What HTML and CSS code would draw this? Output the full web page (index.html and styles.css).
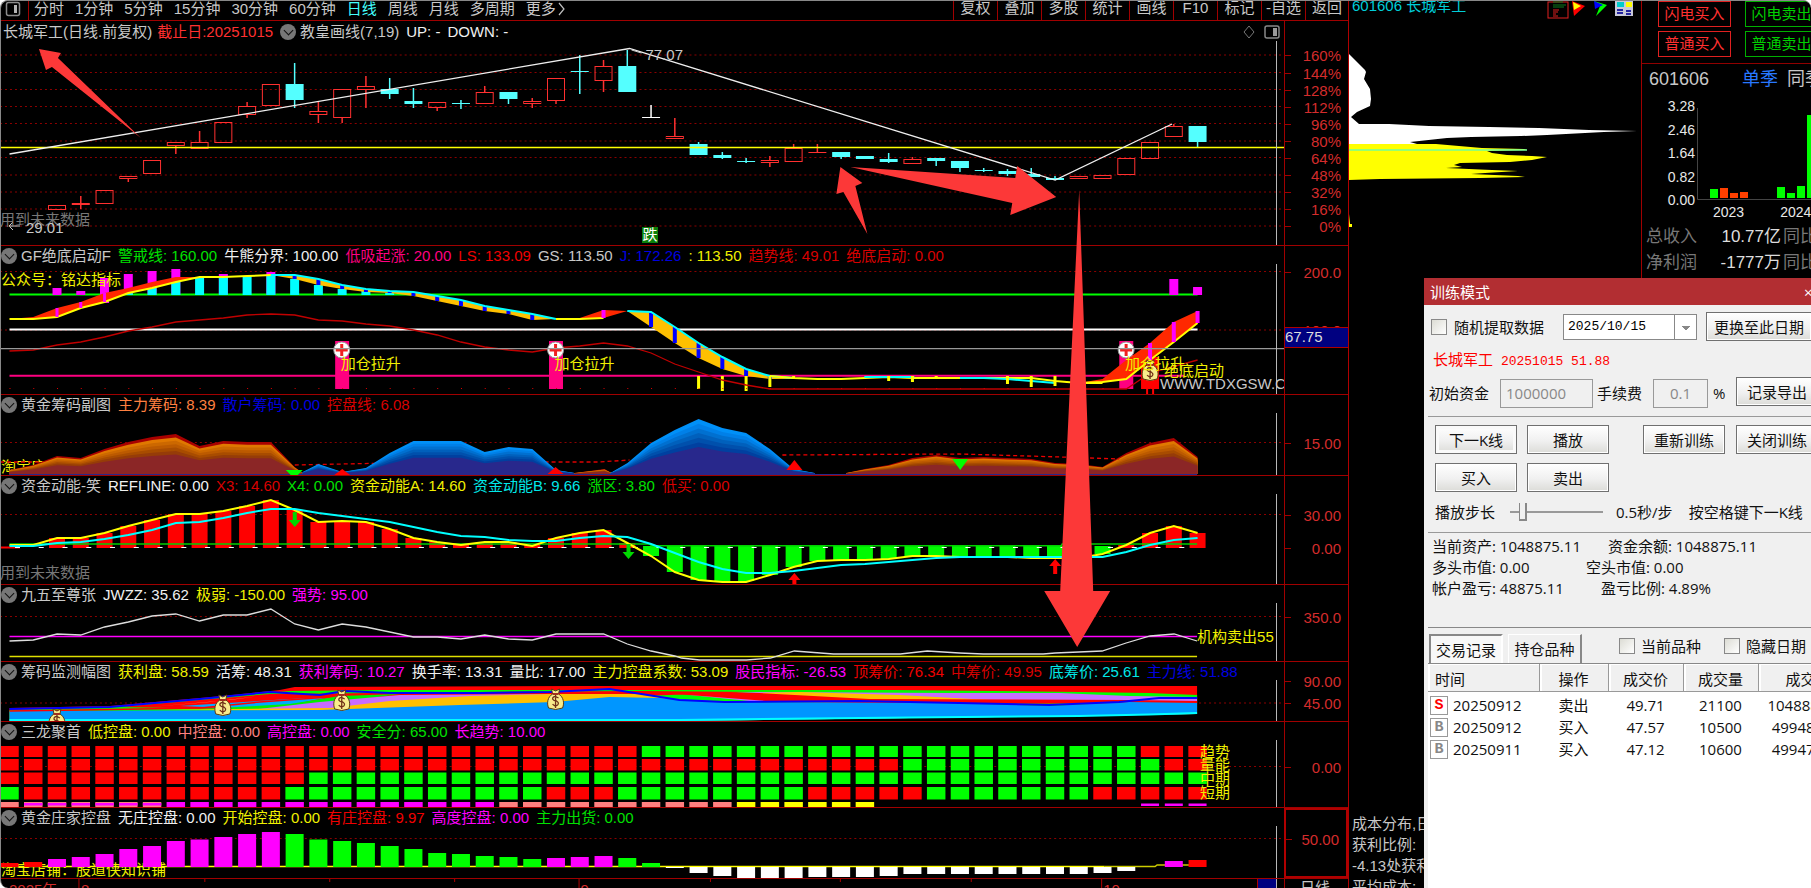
FILE: index.html
```html
<!DOCTYPE html>
<html lang="zh-CN">
<head>
<meta charset="utf-8">
<title>长城军工 601606</title>
<link rel="stylesheet" href="styles.css">
</head>
<body>
<div class="app">
  <main class="workspace">
    <nav class="toolbar">
      <button class="tool-layout" aria-label="布局"><svg viewBox="0 0 16 16" width="16" height="16"><rect x="1.5" y="1.5" width="13" height="13" rx="2" fill="none" stroke="#8c8c8c" stroke-width="1.5"/><rect x="9" y="4" width="3" height="8" fill="#b4b4b4"/></svg></button>
      <div class="periods">
        <button>分时</button><button>1分钟</button><button>5分钟</button><button>15分钟</button><button>30分钟</button><button>60分钟</button><button class="active">日线</button><button>周线</button><button>月线</button><button>多周期</button><button class="more">更多<svg viewBox="0 0 8 14" width="8" height="14"><path d="M1 1L6 7L1 13" fill="none" stroke="#c0c0c0" stroke-width="1.2"/></svg></button>
      </div>
      <div class="actions">
        <button>复权</button><button>叠加</button><button>多股</button><button>统计</button><button>画线</button><button>F10</button><button>标记</button><button>-自选</button><button>返回</button>
      </div>
    </nav>

    <div class="panes">
      <section class="pane" id="p1">
        <div class="plot">
          <header class="legend legend-main"><span>长城军工(日线.前复权)</span><span class="c-red">截止日:20251015</span><i class="fold"></i><span>教皇画线(7,19)</span><span class="c-white">UP: -</span><span class="c-white">DOWN: -</span>
            <span class="corner"><svg viewBox="0 0 12 14" width="12" height="14"><path d="M6 1L11 7L6 13L1 7Z" fill="none" stroke="#777"/></svg><svg viewBox="0 0 16 14" width="16" height="14"><rect x="1" y="1" width="14" height="12" rx="2" fill="none" stroke="#888" stroke-width="1.5"/><rect x="9" y="3" width="4" height="8" fill="#999"/></svg></span></header>
        </div><div class="axis"></div>
      </section>
      <section class="pane" id="p2">
        <div class="plot">
          <header class="legend"><i class="fold"></i><span>GF绝底启动F</span><span class="c-green">警戒线: 160.00</span><span class="c-white">牛熊分界: 100.00</span><span class="c-pink">低吸起涨: 20.00</span><span class="c-pure">LS: 133.09</span><span>GS: 113.50</span><span class="c-blue">J: 172.26</span><span class="c-yellow">: 113.50</span><span class="c-dark">趋势线: 49.01</span><span class="c-dark">绝底启动: 0.00</span></header>
        </div><div class="axis"><span class="cursor-value">67.75</span></div>
      </section>
      <section class="pane" id="p3">
        <div class="plot">
          <header class="legend"><i class="fold"></i><span>黄金筹码副图</span><span class="c-orange">主力筹码: 8.39</span><span class="c-blue">散户筹码: 0.00</span><span class="c-dark">控盘线: 6.08</span></header>
        </div><div class="axis"></div>
      </section>
      <section class="pane" id="p4">
        <div class="plot">
          <header class="legend"><i class="fold"></i><span>资金动能-笑</span><span class="c-white">REFLINE: 0.00</span><span class="c-dark">X3: 14.60</span><span class="c-green">X4: 0.00</span><span class="c-yellow">资金动能A: 14.60</span><span class="c-cyan">资金动能B: 9.66</span><span class="c-green">涨区: 3.80</span><span class="c-dark">低买: 0.00</span></header>
        </div><div class="axis"></div>
      </section>
      <section class="pane" id="p5">
        <div class="plot">
          <header class="legend"><i class="fold"></i><span>九五至尊张</span><span class="c-white">JWZZ: 35.62</span><span class="c-yellow">极弱: -150.00</span><span class="c-magenta">强势: 95.00</span></header>
        </div><div class="axis"></div>
      </section>
      <section class="pane" id="p6">
        <div class="plot">
          <header class="legend"><i class="fold"></i><span>筹码监测幅图</span><span class="c-yellow">获利盘: 58.59</span><span class="c-white">活筹: 48.31</span><span class="c-magenta">获利筹码: 10.27</span><span class="c-white">换手率: 13.31</span><span class="c-white">量比: 17.00</span><span class="c-yellow">主力控盘系数: 53.09</span><span class="c-magenta">股民指标: -26.53</span><span class="c-pure">顶筹价: 76.34</span><span class="c-dark">中筹价: 49.95</span><span class="c-cyan">底筹价: 25.61</span><span class="c-blue">主力线: 51.88</span></header>
        </div><div class="axis"></div>
      </section>
      <section class="pane" id="p7">
        <div class="plot">
          <header class="legend"><i class="fold"></i><span>三龙聚首</span><span class="c-yellow">低控盘: 0.00</span><span class="c-salmon">中控盘: 0.00</span><span class="c-magenta">高控盘: 0.00</span><span class="c-green">安全分: 65.00</span><span class="c-magenta">长趋势: 10.00</span></header>
        </div><div class="axis"></div>
      </section>
      <section class="pane" id="p8">
        <div class="plot">
          <header class="legend"><i class="fold"></i><span>黄金庄家控盘</span><span class="c-white">无庄控盘: 0.00</span><span class="c-yellow">开始控盘: 0.00</span><span class="c-pure">有庄控盘: 9.97</span><span class="c-magenta">高度控盘: 0.00</span><span class="c-green">主力出货: 0.00</span></header>
        </div><div class="axis axis-selected"></div>
      </section>
    </div>
    <footer class="timeline"><div class="plot"></div><div class="period">日线</div></footer>
    <svg class="arrows" viewBox="0 0 1349 888" preserveAspectRatio="none" fill="#fc3838">
      <path d="M39 49L61 53L58 58L141 138L52 67L46 70Z"/>
      <path d="M841 167L863 183L856 186L868 234L844 192L837 194Z"/>
      <path d="M851 167L1016 178L1018 166L1057 197L1011 215L1013 203Z"/>
      <path d="M1080 190L1094 591L1111 591L1078 647L1045 591L1061 591Z"/>
    </svg>
  </main>

  <aside class="side">
    <section class="chips">
      <header class="chips-head"><span>601606 长城军工</span>
        <svg viewBox="0 0 88 20" width="88" height="20">
          <rect x="1" y="1" width="20" height="16" fill="none" stroke="#e02020"/><path d="M6 1H16M6 4H19M6 6H17" stroke="#0a7d1c"/><path d="M6 9H12M6 11H11M6 13H9M6 15H11" stroke="#e02020"/>
          <path d="M25 0L38 5L27 15Z" fill="#f00"/><path d="M26 1L34 5L27 9Z" fill="#ff0"/>
          <path d="M47 0L60 4L49 15L53 5Z" fill="#0f0"/><path d="M47 0L56 4L48 8Z" fill="#00f"/>
          <rect x="68" y="0" width="18" height="15" fill="#c8c8d8"/><rect x="70" y="1" width="7" height="5" fill="#0cc"/><rect x="79" y="1" width="6" height="5" fill="#ff0"/><path d="M70 9H76M70 12H76M79 10H84M79 13H84" stroke="#2424a0" stroke-width="2"/>
        </svg></header>
      <svg class="chips-chart" viewBox="0 0 293 240" width="293" height="240">
        <path d="M0 33L16 49L17 51L15 58L21 68L22 78L21 85L8 91L2 96L10 103H40L80 105L140 106L190 107L240 109L288 110L255 111L198 114L172 115L122 116L98 117L61 121L68 123H0Z" fill="#fff"/>
        <path d="M0 123H87L110 125L133 127L175 128L178 129L138 130L143 132L158 134L183 135L198 136L183 139L161 141L111 142L105 144L113 146L97 147L143 149L169 150L136 152L122 153L169 155L176 156L131 157L31 158L0 159Z" fill="#ff0"/>
        <path d="M0 129H178" stroke="#6fff9a" stroke-width="1.5"/>
        <path d="M0 193L1 203L3 203V206H0Z" fill="#ff0"/>
      </svg>
      <div class="chips-info"><p>成本分布,日期</p><p>获利比例:</p><p>-4.13处获利</p><p>平均成本:</p></div>
    </section>
    <section class="quote">
      <div class="orders"><button class="buy">闪电买入</button><button class="sell">闪电卖出</button><button class="buy">普通买入</button><button class="sell">普通卖出</button></div>
      <div class="quote-head"><span>601606</span><a href="#" class="quarter">单季</a><a href="#">同季</a></div>
      <div class="finance">
        <div class="ticks"><span>3.28</span><span>2.46</span><span>1.64</span><span>0.82</span><span>0.00</span></div>
        <svg viewBox="0 0 115 96" width="115" height="96"><path d="M1.500 3V94.500H115" fill="none" stroke="#444"/><g fill="#0f0"><rect x="14" y="84" width="8" height="9"/><rect x="81" y="82" width="8" height="11"/><rect x="91" y="88" width="8" height="5"/><rect x="101" y="81" width="8" height="12"/><rect x="111" y="10" width="8" height="83"/></g><g fill="#ff4000"><rect x="24" y="83" width="8" height="10"/><rect x="34" y="88" width="8" height="5"/><rect x="44" y="87" width="8" height="6"/></g></svg>
        <div class="years"><span>2023</span><span>2024</span></div>
      </div>
      <dl class="figures"><dt>总收入</dt><dd>10.77亿</dd><dd class="yoy">同比</dd><dt>净利润</dt><dd>-1777万</dd><dd class="yoy">同比</dd></dl>
    </section>

    <section class="dialog" role="dialog" aria-label="训练模式">
      <header class="title"><span>训练模式</span><button aria-label="关闭">×</button></header>
      <div class="form">
        <div class="row row-date"><label><input type="checkbox">随机提取数据</label><select aria-label="日期"><option>2025/10/15</option></select><button class="btn btn-wide">更换至此日期</button></div>
        <p class="picked">长城军工 <span>20251015 51.88</span></p>
        <div class="row row-fund"><label for="fund">初始资金</label><input id="fund" type="text" value="1000000" disabled><label for="fee">手续费</label><input id="fee" type="text" value="0.1" disabled><span class="percent">%</span><button class="btn">记录导出</button></div>
      </div>
      <div class="controls">
        <button class="btn focus">下一K线</button><button class="btn">播放</button><button class="btn restart">重新训练</button><button class="btn">关闭训练</button>
        <button class="btn">买入</button><button class="btn">卖出</button>
      </div>
      <div class="row row-step"><label for="step">播放步长</label><input id="step" type="range" min="0" max="10" value="1"><span>0.5秒/步</span><span class="hint">按空格键下一K线</span></div>
      <div class="summary">
        <p><span>当前资产: 1048875.11</span><span>资金余额: 1048875.11</span></p>
        <p class="s2"><span>多头市值: 0.00</span><span>空头市值: 0.00</span></p>
        <p class="s3"><span>帐户盈亏: 48875.11</span><span>盈亏比例: 4.89%</span></p>
      </div>
      <div class="tabs"><button class="tab selected">交易记录</button><button class="tab">持仓品种</button><label><input type="checkbox">当前品种</label><label><input type="checkbox">隐藏日期</label></div>
      <div class="records">
        <table>
          <colgroup><col class="k1"><col class="k2"><col class="k3"><col class="k3"><col class="k4"></colgroup>
          <thead><tr><th>时间</th><th>操作</th><th>成交价</th><th>成交量</th><th>成交额</th></tr></thead>
          <tbody>
            <tr><td><b class="mark s">S</b>20250912</td><td>卖出</td><td>49.71</td><td>21100</td><td>1048881.00</td></tr>
            <tr><td><b class="mark">B</b>20250912</td><td>买入</td><td>47.57</td><td>10500</td><td>499485.00</td></tr>
            <tr><td><b class="mark">B</b>20250911</td><td>买入</td><td>47.12</td><td>10600</td><td>499472.00</td></tr>
          </tbody>
        </table>
      </div>
    </section>
  </aside>
</div>
<script src="charts.js"></script>
</body>
</html>
```
FILE: styles.css
```css
* { box-sizing: border-box; }
body { margin: 0; background: #fff; color: #c8c8c8; font: 15px/20px "Liberation Sans", "Noto Sans CJK SC", sans-serif; }
p, dl, dd { margin: 0; }
button { font: inherit; color: inherit; background: none; border: 0; padding: 0; white-space: nowrap; }
.app { display: flex; height: 100vh; background: #000; border-radius: 8px 8px 0 8px; overflow: hidden; border-top: 1px solid #888; border-left: 1px solid #888; margin: 0; }
.workspace { position: relative; flex: 1; min-width: 0; display: flex; flex-direction: column; border-right: 1px solid #b00000; margin-left: -1px; margin-top: -1px; }

.toolbar { display: flex; height: 21px; flex: none; border-bottom: 1px solid #a00000; overflow: hidden; line-height: 15px; }
.tool-layout { width: 29px; border-right: 1px solid #a00000; text-align: left; padding-left: 5px; }
.periods { display: flex; gap: 11px; padding-left: 5px; flex: 1; }
.periods button, .actions button { height: 16px; }
.more svg { vertical-align: -2px; margin-left: 2px; }
.active { color: #4ff; }
.actions { display: grid; grid-template-columns: repeat(8, 44px) 43px; }
.actions button { border-left: 1px solid #a00000; height: 20px; padding-bottom: 5px; }

.panes { flex: 1; min-height: 0; display: grid; grid-template-rows: 225fr 149fr 81fr 109fr 77fr 60fr 86fr 71fr; }
.pane { min-height: 0; display: flex; border-bottom: 1px solid #a00000; }
.plot { position: relative; flex: 1; min-width: 0; overflow: hidden; }
.plot > svg { position: absolute; left: 0; top: 0; width: 100%; height: 100%; }
.axis { position: relative; width: 64px; border-left: 1px solid #a00000; color: #d42c2c; }
.axis-selected { border: 2px solid #b00000; }
.axis .tick { position: absolute; right: 7px; height: 20px; margin-top: -9px; }
.axis .tick::before { content: ""; position: absolute; right: 100%; width: 50px; }
.axis .dash { position: absolute; left: 0; width: 6px; height: 1px; background: #a00000; }
.cursor-value { position: absolute; left: 0; right: 0; top: 55%; height: 21px; background: #000080; border: solid #b00000; border-width: 1px 0; color: #ddd; z-index: 1; line-height: 18px; }
.legend { position: relative; z-index: 1; display: flex; align-items: center; gap: 7px; height: 19px; white-space: nowrap; padding-left: 1px; }
.legend .fold + span { margin-left: -3px; }
.legend-main { height: 22px; gap: 7px; padding-left: 3px; }
.legend-main .c-red { margin-left: -2px; }
.corner { display: flex; gap: 9px; margin-left: auto; padding-right: 4px; }
.fold { width: 16px; height: 16px; border-radius: 8px; background: #777; display: flex; align-items: center; justify-content: center; flex: none; }
.fold::before { content: ""; width: 6px; height: 6px; border: solid #111; border-width: 0 1px 1px 0; transform: rotate(45deg); margin-top: -3px; }
.note { position: absolute; white-space: nowrap; height: 20px; margin-top: -10px; }
.badge { background: #0a800a; color: #fff; width: 16px; height: 16px; line-height: 16px; margin-top: -8px; }
.c-red { color: #ff3030; } .c-pure { color: #f00000; } .c-dark { color: #d80000; } .c-white { color: #f0f0f0; }
.c-green { color: #00e000; } .c-pink { color: #ff0080; } .c-blue { color: #0000e0; } .c-yellow { color: #f0f000; }
.c-orange { color: #ff8040; } .c-cyan { color: #00e8e8; } .c-magenta { color: #ff00ff; } .c-salmon { color: #ff8080; }
.c-grey { color: #777; } .c-light { color: #c8c8c8; }
.timeline { display: flex; height: 9px; flex: none; overflow: hidden; color: #d42c2c; }
.timeline .note { margin-top: 0; }
.period { width: 64px; border-left: 1px solid #a00000; padding-left: 15px; color: #c8c8c8; line-height: 18px; }
.arrows { position: absolute; left: 0; top: 0; width: 100%; height: 100%; z-index: 3; pointer-events: none; }

.side { position: relative; width: 462px; flex: none; display: flex; overflow: hidden; }
.chips { width: 293px; flex: none; border-right: 1px solid #a00000; display: flex; flex-direction: column; }
.chips-head { display: flex; justify-content: space-between; height: 20px; color: #00cdd8; line-height: 10px; padding: 0 6px 0 3px; }
.chips-chart { display: block; }
.chips-info { margin-top: auto; height: 75px; padding-left: 3px; line-height: 21px; overflow: hidden; white-space: nowrap; }
.quote { flex: 1; min-width: 0; overflow: hidden; }
.orders { display: grid; grid-template-columns: 73px 73px; gap: 4px 14px; padding: 0 0 6px 16px; border-bottom: 1px solid #900000; }
.orders button { height: 26px; border: 1px solid; }
.buy { color: #ff3030; } .sell { color: #00d000; }
.orders .buy { border-color: #e02020; } .orders .sell { border-color: #00b000; }
.quote-head { display: flex; gap: 9px; padding: 5px 0 0 7px; font-size: 18px; white-space: nowrap; }
.quote-head .quarter { margin-left: 24px; color: #2878ff; }
.quote-head a { color: inherit; text-decoration: none; }
.finance { display: grid; grid-template-columns: 53px 115px; column-gap: 1px; padding-top: 15px; font-size: 14px; line-height: 16px; color: #e8e8e8; }
.ticks { display: flex; flex-direction: column; justify-content: space-between; text-align: right; height: 110px; margin-top: -6px; }
.finance svg { margin-top: 1px; }
.years { grid-column: 2; display: flex; gap: 36px; padding-left: 17px; margin-top: -4px; }
.figures { display: grid; grid-template-columns: 53px 80px 40px; column-gap: 2px; row-gap: 6px; font-size: 17px; padding: 7px 0 0 4px; white-space: nowrap; color: #ddd; }
.figures dd { text-align: right; }
.figures dt, .figures .yoy { color: #777; text-align: left; }

.dialog { position: absolute; left: 75px; right: 0; top: 277px; bottom: 0; background: #f0f0f0; color: #111; font-family: "Open Sans", "Noto Sans CJK SC", sans-serif; display: flex; flex-direction: column; overflow: hidden; white-space: nowrap; }
.title { background: #b22e32; color: #fff; height: 27px; flex: none; display: flex; justify-content: space-between; align-items: center; padding: 0 0 0 6px; }
.title button { width: 7px; overflow: hidden; }
.form { height: 112px; flex: none; border-bottom: 1px solid #999; margin-left: 4px; }
.row { display: flex; align-items: center; }
.row > *, .tabs > * { flex: none; }
label { display: inline-flex; align-items: center; gap: 7px; }
input[type=checkbox] { appearance: none; width: 16px; height: 16px; margin: 0; border: 1px solid #888; background: linear-gradient(135deg, #dcdcd4, #fff); }
.row-date { padding: 7px 0 0 3px; }
.row-date select { appearance: none; width: 134px; height: 26px; margin: 0 9px 0 19px; padding: 0 4px; border: 1px solid #888; border-radius: 0; color: #000; font: 13px "Liberation Mono", monospace; background: linear-gradient(#888, #888) 110px 0 / 1px 100% no-repeat, conic-gradient(from -45deg at 50% 100%, #888 90deg, transparent 0) 117px 11px / 9px 5px no-repeat, #fff; background: linear-gradient(#888, #888) 110px 0 / 1px 100% no-repeat, linear-gradient(to bottom left, #888 50%, transparent 50%) 118px 11px / 4px 5px no-repeat, linear-gradient(to bottom right, #888 50%, transparent 50%) 122px 11px / 4px 5px no-repeat, #fff; }
.btn { height: 29px; width: 82px; border: 1px solid #707070; background: linear-gradient(#fff, #f0f0f0 55%, #dcdcd8); box-shadow: inset 0 0 0 1px #fff; }
.btn-wide { width: 106px; }
.focus { box-shadow: inset 0 0 0 3px #fafafa; }
.picked { color: #f00; height: 36px; line-height: 36px; padding-left: 5px; }
.picked span { font: 13px "Liberation Mono", monospace; margin-left: 4px; }
.row-fund input { height: 29px; width: 93px; margin: 0 4px 0 11px; border: 1px solid #999; background: #f0f0f0; color: #888; font: inherit; padding: 0 5px; }
.row-fund #fee { width: 55px; text-align: center; margin: 0 5px 0 11px; }
.row-fund .percent { width: 23px; }
.row-fund .btn { margin-bottom: 3px; }
.row-fund { padding-left: 1px; }
.controls { display: grid; grid-template-columns: 82px 82px 82px 82px; gap: 9px 10px; padding: 8px 0 0 11px; flex: none; }
.controls .restart { margin-left: 24px; }
.controls .restart + .btn { margin-left: 25px; }
.row-step { height: 41px; flex: none; margin-left: 4px; padding-left: 7px; border-bottom: 1px solid #999; }
.row-step input { appearance: none; width: 93px; height: 18px; margin: 0 13px 0 15px; background: linear-gradient(#999, #999) 0 8px / 100% 2px no-repeat; }
.row-step input::-webkit-slider-thumb { appearance: none; width: 8px; height: 18px; background: #f0f0f0; border: 1px solid #888; border-width: 0 2px 2px 1px; }
.hint { margin-left: 16px; }
.summary { height: 95px; flex: none; margin-left: 4px; padding: 3px 0 0 4px; line-height: 21px; border-bottom: 1px solid #888; }
.summary span:first-child { display: inline-block; width: 176px; }
.summary .s2 span:first-child { width: 154px; }
.summary .s3 span:first-child { width: 169px; }
.tabs { display: flex; align-items: flex-end; height: 36px; flex: none; margin-left: 4px; border-bottom: 1px solid #888; }
.tab { height: 29px; width: 74px; margin: 0 2px 0 1px; border: solid #fff; border-width: 1px 2px 0 1px; border-right-color: #888; }
.tab.selected { background: #f8f8f8; border: 2px solid #888; border-right-color: #fff; border-bottom: 0; margin-right: 4px; }
.tabs label { gap: 6px; height: 20px; margin: 0 0 7px 35px; }
.tabs label + label { margin-left: 23px; }
.records { flex: 1; background: #fff; margin-left: 4px; overflow: hidden; }
table { border-collapse: collapse; table-layout: fixed; width: 430px; }
.k1 { width: 111px; } .k2 { width: 69px; } .k3 { width: 75px; } .k4 { width: 100px; }
th { height: 27px; padding: 4px 0 0; font-weight: normal; background: #f0f0f0; border-right: 1px solid #999; border-bottom: 1px solid #999; box-shadow: inset 2px 1px #fff; }
th:first-child { text-align: left; padding-left: 7px; }
td { padding: 0; text-align: center; height: 22px; line-height: 22px; }
tbody::before { content: ""; display: table-row; height: 3px; }
td:first-child { text-align: left; }
.mark { display: inline-block; width: 18px; height: 19px; margin: 2px 5px 0 2px; border: 1px solid #999; color: #888; font: 700 15px/17px "Liberation Mono", monospace; text-align: center; vertical-align: top; }
.mark.s { color: #f00; }
```
FILE: charts.js
```javascript
const W = 1285;
const X = i => 9.5 + 23.78 * i;
const series = (ys, start = 0) => ys.map((y, k) => [X(start + k), y]);
const pts = a => a.map(p => p.map(v => +v.toFixed(1)).join(',')).join(' ');
const rect = (x, y, w, h, fill) => `<rect x="${x}" y="${y}" width="${w}" height="${h}" fill="${fill}"/>`;
const line = (x1, y1, x2, y2, c, w = 1, extra = '') => `<line x1="${x1}" y1="${y1}" x2="${x2}" y2="${y2}" stroke="${c}" stroke-width="${w}" ${extra}/>`;
const poly = (a, c, w = 1, extra = '') => `<polyline points="${pts(a)}" fill="none" stroke="${c}" stroke-width="${w}" ${extra}/>`;
const area = (a, c) => `<polygon points="${pts(a)}" fill="${c}"/>`;
const grid = y => line(0, y, W, y, '#8c0000', 1, 'stroke-dasharray="2 3"');
const bar = (i, y1, y2, c, w = 18) => rect(X(i) - w / 2, y1, w, y2 - y1, c);
const bag = (x, y) => `<g transform="translate(${x} ${y})"><path d="M-4 -11L0 -9L4 -11L3 -6C8 -3 9 3 7 8Q0 11 -7 8C-9 3 -8 -3 -3 -6Z" fill="#f8ec8c" stroke="#5a3a10"/><path d="M-3 -6H3" stroke="#a03020" stroke-width="2"/><path d="M3 -2Q-3 -5 -3 -1Q-2 1 1 1Q4 3 2 5Q-1 7 -3 4M0 -5V8" fill="none" stroke="#703018" stroke-width="1.3"/></g>`;
const cross = (x, y) => `<circle cx="${x}" cy="${y}" r="8" fill="#fff" stroke="#999"/><path d="M${x} ${y - 6}V${y + 6}M${x - 6} ${y}H${x + 6}" stroke="#f02020" stroke-width="3"/>`;

function draw(id, top, height, body, opts = {}) {
  const plot = document.querySelector(`#${id} .plot`);
  const below = (opts.under || []).map(n => note(n, top, height)).join('');
  const above = (opts.notes || []).map(n => note(n, top, height)).join('');
  const cursor = line(1277.5, top + (id === 'p1' ? 20 : 18), 1277.5, top + height, '#b8b8b8');
  plot.insertAdjacentHTML('beforeend', `${below}<svg viewBox="0 ${top} ${W} ${height}" preserveAspectRatio="none">${body}${cursor}</svg>${above}`);
  const axis = document.querySelector(`#${id} .axis`);
  (opts.ticks || []).forEach(([label, y]) => {
    const t = (y - top) / height * 100;
    axis.insertAdjacentHTML('beforeend', `<i class="dash" style="top:${t}%"></i><span class="tick" style="top:${t}%">${label}</span>`);
  });
}
function note([text, x, y, cls], top, height) {
  return `<span class="note ${cls}" style="left:${x / W * 100}%;top:${(y - top) / height * 100}%">${text}</span>`;
}

// Daily candles: index, colour, body top, body bottom, high, low
const R = '#ff3030', C = '#54ffff';
const candles = [
[2,R,205,210],[3,R,203,205,196,209],[4,R,190,204],[5,R,176,179,176,182],[6,R,160,174],[7,R,142,146,142,154],[8,R,142,149,131],[9,R,122,143],[10,R,106,115,102,118],[11,R,84,106],[12,C,84,100,63,108],[13,R,111,115,101,123],[14,R,89,118,89,123],[15,R,86,90,76,108],[16,C,89,94,78,99],[17,C,101,104,88,108],[18,R,102,108,102,111],[19,C,103,104,100,109],[20,R,92,104,86],[21,C,92,99,92,104],[22,R,101,104,98,108],[23,R,78,101,78,104],[24,C,71,72,55,94],[25,R,66,81,60,92],[26,C,66,92,50],[27,'#fff',117,118,105],[28,R,136,139,118],[29,C,144,155,142],[30,C,155,158,152,159],[31,C,161,162,158,163],[32,R,160,163,156,167],[33,R,148,162,144],[34,R,152,153,144],[35,C,152,157,152,159],[36,C,156,159],[37,C,159,162,153,163],[38,R,159,164,157],[39,C,158,161,158,166],[40,C,161,168,161,172],[41,C,170,171,168,172],[42,C,171,174,169,176],[43,C,174,177,168],[44,C,178,180,176],[45,R,176,179],[46,R,175,179],[47,R,158,175],[48,R,142,159],[49,R,126,137,124],[50,C,126,142,126,147]];
const pctY = [55,72.5,89.5,106.5,123.5,141,157.5,175,192,209,226];
draw('p1', 21, 224,
  pctY.map(grid).join('') +
  candles.map(([i, c, a, b, h = a, l = b]) => (h < a ? line(X(i), h, X(i), a, c, 1.5) : '') + (l > b ? line(X(i), b, X(i), l, c, 1.5) : '') +
    (c === R && b - a > 2 ? `<rect x="${X(i) - 8.5}" y="${a + .5}" width="17" height="${b - a - 1}" fill="none" stroke="${c}"/>` : bar(i, a, b, c))).join('') +
  line(0, 147.5, W, 147.5, '#ff0', 1.5) +
  poly([[9.5,154],[630,48.5],[1056,180],[1173,124]], '#eee', 1.3) +
  poly([[20,226],[9,226],[13,222],[9,226],[13,230]], '#ccc') + poly([[642,53],[632,50]], '#ccc'),
  { ticks: pctY.map((y, k) => [`${160 - 16 * k}%`, y]),
    notes: [['用到未来数据',0,220,'c-grey'],['29.01',26,228,'c-light'],['77.07',646,55,'c-light'],['跌',643,235,'badge']] });

// Trend band
const up = series([319,317,308,302,293,288,282,277,277,276,276,275]);
const lo = series([319,319,317,308,302,293,288,282,277,277,276,275]);
const cy1 = [275,275,279,285,289,291,292,296,300,306,310,314,319];
const cl1 = [275,279,285,289,292,293,296,301,306,311,314,320,319];
const cy2 = [311,312,327,343,357,369,376,378], cl2 = [311,327,343,358,369,376,379,379];
const endLo = [383,382,379,360,342,323], endUp = [383,379,360,343,322,311];
let b2 = grid(271.5) + grid(330) + line(9.5, 294.5, X(50), 294.5, '#0f0', 2) + line(9.5, 329.5, X(50), 329.5, '#fff', 2) + line(9.5, 375.7, 1185, 375.7, '#ff0080', 2);
[[2,288],[3,291],[4,278],[5,274],[6,271],[7,269],[9,274],[11,272],[49,279],[50,287]].forEach(([i, y]) => b2 += bar(i, y, 295, '#f0f', 9));
b2 += bar(4, 278, 303, '#f0f', 9);
[292,284,280,277,276,276,275,279,285,289,291,293].forEach((y, k) => b2 += bar(k + 5, y, 295, '#0ff', 9));
b2 += area([...up, ...lo.slice().reverse()], '#ff2800') + poly(lo, '#ff0', 2);
for (let i = 2; i < 5; i++) b2 += bar(i, up[i][1], lo[i][1], '#f0f', 3);
const band = (s, a, b) => {
  let o = area([...series(a, s), ...series(b, s).reverse()], '#ffc000');
  a.forEach((y, k) => { if (b[k] - y > 1) o += bar(s + k, y, b[k], '#00f', 4); });
  return o + poly(series(a, s), '#0ff', 2);
};
b2 += band(11, cy1, cl1);
b2 += area(series([319,318,310,311], 23).concat(series([318,319], 25).slice(0,1), [[X(23),319]]), '#ff2800') + poly(series([319,319,318], 23), '#ff0', 2) + bar(25, 310, 318, '#f0f', 4);
b2 += band(26, cy2, cl2);
b2 += poly(series([376,378,379,379,378,377,378,378,378,378,378,378,381,383,383], 32), '#ff0', 2) + poly([[865,377],[915,377]], '#0ff', 2) + poly(series([378,378,379,381,383], 40), '#0ff', 2);
b2 += bar(14, 341, 389, '#ff0080', 14) + bar(23, 341, 389, '#ff0080', 14) + bar(47, 341, 389, '#ff0080', 14) + bar(48, 357, 389, '#f00', 18) + line(1148, 388, 1148, 394, '#f00', 2) + line(1154, 388, 1154, 394, '#f00', 2);
b2 += area([...series(endUp, 45), ...series(endLo, 45).reverse()], '#ff2800') + poly(series(endLo, 45), '#ff0', 2);
[[48,343,360],[49,322,342],[50,311,323]].forEach(([i, a, b]) => b2 += bar(i, a, b, '#f0f', 4));
[[29,389],[30,391],[31,391],[32,387],[33,379],[37,381],[38,382],[39,379],[42,384],[43,387],[44,386]].forEach(([i, y]) => b2 += bar(i, 376, y, '#ff0', 3));
b2 += poly(series([351,350,345,342,337,331,327,322,320,318,315,314,315,320,321,324,326,330,335,342,347,350,352,348,346,343,346,353,364,372,380,385,389]).concat(series([389,373,360], 47).map((p, k) => k === 2 ? [X(50), 360] : p)), '#c00000', 1.3);
for (let i = 0; i < 51; i++) b2 += rect(X(i), 388, 1, 1, '#d00');
b2 += cross(342, 350) + cross(556, 350) + cross(1127, 350) + bag(1151, 371) + line(0, 348.7, W, 348.7, '#999', 1.3);
draw('p2', 246, 148, b2, { ticks: [['200.0',271.5],['100.0',330]],
  notes: [['公众号：铭达指标',1,280,'c-yellow'],['加仓拉升',341,364,'c-yellow'],['加仓拉升',555,364,'c-yellow'],['加仓拉升',1126,364,'c-yellow'],['绝底启动',1165,371,'c-yellow'],['WWW.TDXGSW.COM',1161,384,'c-light']] });

// Chip areas, drawn as layers shrinking toward the baseline
const layers = (a, cols) => cols.map((c, k) => {
  const f = 1 - k * .085;
  return area([[a[0][0], 474], ...a.map(([x, y]) => [x, 474 - (474 - y) * f]), [a[a.length - 1][0], 474]], c);
}).join('');
const warm = ['#a80000','#e07800','#cc6800','#bc5a00','#a84c00','#963c08','#8b2626'];
const cool = ['#0090f8','#0080e8','#0070d0','#0060bc','#0050ac','#0040a0','#28288c'];
const a1 = series([470,465,456,458,449,442,437,434,446,441,442,442,467]).concat([[303,473]]);
const a2 = [[303,472],[X(13),464],[X(14),472],[X(15),468],[X(16),453],[X(17),441],[X(18),441],[X(19),441],[X(20),452],[X(21),447],[X(22),449],[X(23),470],[575,473]];
const a3 = [[611,473],[628,463],[X(27),443],[X(28),430],[X(29),419],[X(30),428],[X(31),433],[X(32),449],[X(33),469],[815,473]];
const a4 = [[847,473],...series([469,465,458,455,458,457,458,459,463,464,467,453,443,438,457], 36)];
const tri = (x, y, h, c, up) => area(up ? [[x, y], [x + 8, y + h], [x - 8, y + h]] : [[x, y + h], [x + 8, y], [x - 8, y]], c);
const dash = 'stroke-dasharray="4 3"';
draw('p3', 395, 80, grid(442.5) +
  poly([[0,462],[45,462]], '#d00', 1.3, dash) + poly([[295,465],[390,463]], '#d00', 1.3, dash) + poly([[545,462],[600,462],[630,460]], '#d00', 1.3, dash) +
  layers(a1, warm) + layers(a2, cool) + layers([[575,473],[605,469],[612,473]], warm) + layers(a3, cool) + layers(a4, warm) + line(9, 474.5, 1198, 474.5, '#28288c', 1) +
  poly([[783,455],[960,454],[1062,457],[1120,459]], '#e00', 1.3, dash) +
  area([[286,470],[303,470],[298,475],[291,475]], '#0f0') + tri(342.500, 469, 6, '#f00', 1) + tri(556, 467, 7, '#f00', 1) + tri(795, 460, 10, '#f00', 1) + tri(961, 459, 11, '#0f0', 0),
  { ticks: [['15.00',442.5]], under: [['淘宝店',1,467,'c-yellow']] });

// Momentum
const yl = [545,545,538,538,533,526,520,514,514,511,506,500,510,522,521,522,529,538,542,545,542,542,546,538,533,530,543,556,572,580,582,582,575,567,561,560,560,559,556,556,557,557,557,558,558,558,554,545,533,526,533];
const cl = [546,546,543,542,539,535,530,523,522,518,513,509,509,513,516,519,522,527,532,536,537,540,541,541,538,536,537,544,553,562,569,573,573,571,568,565,564,562,560,558,557,557,557,557,557,557,557,552,545,540,538];
let b4 = grid(514.5) + line(0, 547.5, 20, 547.5, '#f00', 2);
yl.forEach((y, i) => { b4 += i < 2 ? '' : i > 26 && i < 47 ? bar(i, 546, Math.max(Math.min(y, 581), 553), '#00fa00', 16) : bar(i, Math.min(y, 545), 548, '#f00', 16); });
b4 += line(15, 547.5, 1190, 547.5, '#fff', 1, 'stroke-dasharray="5 18.78"');
b4 += poly([[9.5,544],[650,544],[652,545.7],[1062,545.7],[1063,544],[1198,544]], '#00d000', 1.5) + poly(series(yl), '#ff0', 2) + poly(series(cl), '#0ff', 2);
const arrow = (x, y, d, c) => area([[x, y], [x + 6, y + 7 * d], [x + 2, y + 7 * d], [x + 2, y + 15 * d], [x - 2, y + 15 * d], [x - 2, y + 7 * d], [x - 6, y + 7 * d]], c);
b4 += arrow(295, 527, -1, '#00d800') + arrow(629, 559, -1, '#00d800') + arrow(795, 573, 1, '#f00') + arrow(1056, 559, 1, '#f00');
draw('p4', 476, 108, b4, { ticks: [['30.00',515],['0.00',547.5]], notes: [['用到未来数据',0,573,'c-grey']] });

const jw = series([641,640,634,635,627,622,616,614,621,615,615,609,624,630,624,627,632,637,637,639,635,639,640,634,634,634,644,651,656]);
draw('p5', 585, 76, grid(616.5) + line(9.5, 636.5, 1198, 636.5, '#f0f', 1.3) + line(9.5, 656.5, 1198, 656.5, '#e0e000', 1.5) +
  poly(jw.concat([[682,658],[700,660],[747,660],[771,658],[795,651],[834,654],[901,654],[928,651],[960,653],[984,654],[1044,654],[1056,653],[1103,651],[1127,643],[1151,636],[1175,634],[1198,641]]), '#ddd', 1.3),
  { ticks: [['350.0',616.5]], notes: [['机构卖出55',1198,637,'c-yellow']] });

// Cost distribution bands
const stack = (top, c) => area([...top, [1198, 714], [1080, 716], [910, 718], [680, 721], [9.5, 721]], c);
draw('p6', 662, 59, grid(703) +
  stack([[9.5,708],[110,706],[223,696],[280,690],[295,687],[580,686],[1198,686]], '#f00') +
  stack([[9.5,710],[110,707],[223,697],[290,691],[380,690],[610,690],[895,690],[1080,692],[1150,693],[1198,695]], '#0f0') +
  area([[120,707],[200,700],[270,694],[480,692],[640,691],[760,692],[610,697],[400,706],[223,709]], '#f00') +
  area([[150,707],[230,700],[260,696],[210,702]], '#f8a050') +
  area([[180,706],[290,699],[330,697],[290,705],[230,708]], '#0af') +
  area([[200,709],[290,704],[340,696],[400,694],[340,702],[300,709]], '#00f000') +
  area([[250,710],[320,702],[400,695],[555,694],[555,698],[430,703],[340,709]], '#c86cff') +
  area([[150,710],[330,708],[390,701],[470,696],[555,694],[640,694],[670,699],[550,704],[440,708],[330,711]], '#ffc000') +
  area([[690,695],[760,692],[950,693],[1060,693],[1130,696],[1198,697],[1198,703],[920,703],[760,702]], '#c86cff') +
  area([[700,694],[800,692],[900,695],[1010,701],[900,702],[760,700]], '#ffc000') +
  area([[650,692],[760,693],[870,699],[1130,700],[1198,701],[1198,703],[950,704],[780,702]], '#f00') +
  stack([[9.5,711],[320,710],[377,708],[460,705],[555,702],[610,697],[660,698],[730,702],[960,703],[1050,706],[1130,702],[1198,703]], '#0096ff') +
  poly([[9.5,709],[110,707],[200,699],[270,692],[320,695],[345,691],[390,693],[480,693],[550,692],[610,689],[680,700],[725,702],[860,701],[960,703],[1050,705],[1120,702],[1160,698],[1198,698]], '#00f', 2) +
  poly([[9.5,711],[80,710],[200,708],[260,702],[330,697]], '#f00', 1.5) +
  poly([[9.5,720],[680,720],[910,717.5],[1080,716],[1150,714.5],[1198,713]], '#0ff', 2) + bag(57, 720) + bag(223, 706) + bag(342, 701) + bag(556, 700),
  { ticks: [['90.00',680.5],['45.00',703]] });

// Signal blocks: run lengths per row
const G = '#0f0', Rd = '#f00';
const rows = [[746,757,[[27,Rd],[21,G],[3,Rd]]],[759,770.5,[[38,Rd],[11,G],[2,Rd]]],[772.5,784,[[13,Rd],[38,G]]],[787,799.5,[[1,G],[11,Rd],[11,G],[3,Rd],[8,G],[5,Rd],[7,G],[5,Rd]]],[802,807,[[1,'#ff8080'],[6,'#ff8080'],[14,'#f0f'],[10,'#ff8080'],[6,'#ff0']]]];
let b7 = grid(766.5);
rows.forEach(([a, b, runs]) => { let i = 0; runs.forEach(([n, c]) => { while (n--) b7 += bar(i++, a, b, c, 18.5); }); });
for (let i = 1; i < 7; i++) b7 += bar(i, 803, 805.5, '#f0f', 18.5);
for (let i = 48; i < 51; i++) b7 += bar(i, 803.5, 806, '#f0f');
draw('p7', 722, 85, b7, { ticks: [['0.00',766.5]], notes: [['趋势',1201,752,'c-yellow'],['量能',1201,765,'c-yellow'],['中期',1201,779,'c-yellow'],['短期',1201,793,'c-yellow']] });

const ctl = [863,862,859,857,854,849,846,841,839.5,837,834,832,834,839.5,841,843,846,849,853,854,856,857,859,858,857,856,858,863,868,873,876,878,878,878,877,877,877,876,874,874,874,874,874,874,874,874,873,871];
let b8 = grid(838.5) + line(0, 866.5, W * .86, 866.5, '#ff0', 1.5) + poly([[1105,866.5],[1156,866.5],[1158,865],[1190,865]], '#cc0', 1.5);
ctl.forEach((y, i) => b8 += i > 27 ? bar(i, 867, y, '#fff') : bar(i, y, 867, i < 2 ? Rd : i < 12 || (i > 22 && i < 26) ? '#f0f' : G));
b8 += bar(49, 861, 867, '#f0f') + bar(50, 860, 867, Rd);
draw('p8', 808, 70, b8, { ticks: [['50.00',838.5]], under: [['淘宝店铺：股道侠知识铺',1,870,'c-yellow']] });

const tl = document.querySelector('.timeline .plot');
tl.innerHTML = `<svg viewBox="0 0 ${W} 9" preserveAspectRatio="none">${[79,579.5,1102.5].map(x => line(x, 0, x, 9, '#b00000')).join('')}${[205,330,455,711,841,972].map(x => line(x, 0, x, 3, '#b00000')).join('')}${rect(1259,0,18,9,'#000080')}${line(1258.5,0,1258.5,9,'#b00000')}${line(1277.5,0,1277.5,9,'#b8b8b8')}</svg>` +
  [['2025年',9],['8',81],['9',581],['10',1104]].map(([t, x]) => note([t, x, 1, 'c-red-dim'], 0, 9)).join('');
```
